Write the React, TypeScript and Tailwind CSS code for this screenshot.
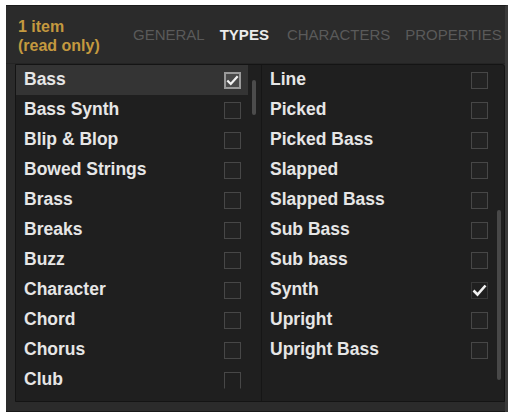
import React from "react";

const LEFT = [
  { name: "Bass", checked: true },
  { name: "Bass Synth" },
  { name: "Blip & Blop" },
  { name: "Bowed Strings" },
  { name: "Brass" },
  { name: "Breaks" },
  { name: "Buzz" },
  { name: "Character" },
  { name: "Chord" },
  { name: "Chorus" },
  { name: "Club", cut: true },
];

const RIGHT = [
  { name: "Line" },
  { name: "Picked" },
  { name: "Picked Bass" },
  { name: "Slapped" },
  { name: "Slapped Bass" },
  { name: "Sub Bass" },
  { name: "Sub bass" },
  { name: "Synth", checked: true },
  { name: "Upright" },
  { name: "Upright Bass" },
];

type Item = { name: string; checked?: boolean; cut?: boolean };

function Check({ item, boxed }: { item: Item; boxed?: boolean }) {
  if (item.checked) {
    return (
      <span
        className={
          "w-[17px] h-[17px] flex items-center justify-center " +
          (boxed ? "border-2 border-[#9a9a9a] bg-[#4a4a4a]" : "border border-[#383838]")
        }
      >
        <svg width="15" height="13" viewBox="0 0 15 13" fill="none">
          <path d="M1.5 6.5 L5.5 10.5 L13.5 1.5" stroke="#f2f2f2" strokeWidth="2.6" />
        </svg>
      </span>
    );
  }
  return (
    <span
      className={
        "w-[17px] h-[17px] border border-[#474747] bg-[#232323] " +
        (item.cut ? "border-b-transparent bg-transparent" : "")
      }
    />
  );
}

function Row({ item, selected, pr }: { item: Item; selected?: boolean; pr: string }) {
  return (
    <div
      className={
        "h-[30px] flex items-center justify-between pl-[8px] " +
        pr +
        (selected ? " bg-[#343434]" : "")
      }
    >
      <span className="text-[17.5px] font-bold text-[#e6e6e6] leading-none">{item.name}</span>
      <Check item={item} boxed={selected} />
    </div>
  );
}

export default function App() {
  return (
    <div
      className="w-[512px] h-[412px] bg-white pt-[5px] pl-[6px] pr-[4px] overflow-hidden"
      style={{ fontFamily: '"Liberation Sans", Arial, sans-serif' }}
    >
      <div className="h-[407px] bg-[#2b2b2b] border-t border-[#1c1c1c] border-r-[3px] border-r-[#3a3a3a] flex flex-col">
        <div className="h-[58px] flex items-center pl-[12px] border-b border-[#242424]">
          <div className="w-[115px] text-[16px] font-bold leading-[19px] text-[#c4993f] mt-[3px]">
            <div>1 item</div>
            <div>(read only)</div>
          </div>
          <div className="flex items-center text-[15px] text-[#5a5a5a] mt-[1px]">
            <span>GENERAL</span>
            <span className="ml-[15px] font-bold text-[#ececec]">TYPES</span>
            <span className="ml-[18px]">CHARACTERS</span>
            <span className="ml-[15px]">PROPERTIES</span>
          </div>
        </div>
        <div className="ml-[9px] h-[338px] bg-[#1f1f1f] border border-[#141414] rounded-tr-[3px] flex">
          <div className="w-[246px] flex border-r border-[#161616]">
            <div className="w-[232px]">
              {LEFT.map((it, i) => (
                <Row key={it.name} item={it} selected={i === 0} pr="pr-[7px]" />
              ))}
            </div>
            <div className="w-[4px] ml-[4px] pt-[15px]">
              <div className="h-[35px] rounded-full bg-[#4c4c4c]" />
            </div>
          </div>
          <div className="flex-1 flex">
            <div className="flex-1">
              {RIGHT.map((it) => (
                <Row key={it.name} item={it} pr="pr-[5px]" />
              ))}
            </div>
            <div className="w-[4px] ml-[4px] mr-[3px] pt-[145px]">
              <div className="h-[170px] rounded-full bg-[#484848]" />
            </div>
          </div>
        </div>
        <div className="flex-1 border-b border-[#181818]" />
      </div>
    </div>
  );
}
